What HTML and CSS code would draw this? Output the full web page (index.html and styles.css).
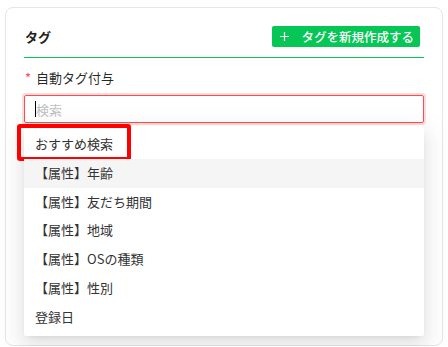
FILE: index.html
```html
<!DOCTYPE html>
<html lang="ja">
<head>
    <meta charset="utf-8">
    <title>タグ</title>
    <link rel="stylesheet" href="styles.css">
</head>
<body>
    <div class="card">
        <div class="card-head">
            <span class="card-title">タグ</span>
            <button class="btn-new">
                <svg class="plus" width="9" height="9" viewBox="0 0 9 9"><path d="M4.5 0V9M0 4.5H9" stroke="#fff" stroke-width="1.2"/></svg>
                タグを新規作成する
            </button>
        </div>

        <div class="field">
            <div class="field-label"><span class="req">*</span>自動タグ付与</div>
            <div class="select">
                <span class="caret"></span><span class="placeholder">検索</span>
            </div>
            <div class="dropdown">
                <div class="option first">おすすめ検索<span class="mark"></span></div>
                <div class="option active">【属性】年齢</div>
                <div class="option">【属性】友だち期間</div>
                <div class="option">【属性】地域</div>
                <div class="option">【属性】OSの種類</div>
                <div class="option">【属性】性別</div>
                <div class="option">登録日</div>
            </div>
        </div>
    </div>
</body>
</html>
```

FILE: styles.css
```css
body {
    margin: 0;
    padding: 7px 5px 0 5px;
    background-color: #fff;
    font-family: "Noto Sans CJK JP", "Noto Sans", sans-serif;
    color: rgba(0, 0, 0, 0.85);
}
.card {
    height: 339px;
    box-sizing: border-box;
    border: 1px solid #e6e6e6;
    border-radius: 8px;
    padding: 18px 18px 0 18px;
}
.card-head {
    display: flex;
    justify-content: space-between;
    align-items: center;
    padding: 0 0 10px 0;
    margin-right: 0;
    border-bottom: 1px solid #06c755;
}
.card-title {
    font-size: 13px;
    font-weight: bold;
    color: #222;
    line-height: 21px;
    padding-left: 1px;
}
.btn-new {
    display: flex;
    align-items: center;
    height: 21px;
    margin-right: 4px;
    padding: 0 6px 0 8px;
    border: none;
    border-radius: 2px;
    background-color: #06c755;
    color: #fff;
    font-family: inherit;
    font-size: 12.5px;
    font-weight: 500;
    cursor: pointer;
}
.plus {
    margin-right: 12px;
}
.field {
    position: relative;
    padding-top: 10px;
}
.field-label {
    font-size: 13px;
    line-height: 20px;
    margin-bottom: 7px;
}
.req {
    color: #ff4d4f;
    margin: 0 5px 0 1px;
}
.select {
    display: flex;
    align-items: center;
    height: 28px;
    box-sizing: border-box;
    border: 1px solid #ff4d4f;
    border-radius: 2px;
    box-shadow: 0 0 0 2px rgba(255, 77, 79, 0.2);
    padding-left: 10px;
    font-size: 13px;
}
.caret {
    width: 1px;
    height: 16px;
    background-color: #000;
}
.placeholder {
    color: #bfbfbf;
}
.dropdown {
    position: absolute;
    left: 0;
    right: 0;
    top: 68px;
    padding: 4px 0;
    background-color: #fff;
    border-radius: 2px;
    box-shadow: 0 3px 6px -4px rgba(0, 0, 0, 0.12), 0 6px 16px 0 rgba(0, 0, 0, 0.08), 0 9px 28px 8px rgba(0, 0, 0, 0.05);
}
.option {
    position: relative;
    padding: 4px 11px;
    font-size: 13px;
    line-height: 20.8px;
    color: #333;
}
.option.active {
    background-color: #f5f5f5;
}
.mark {
    position: absolute;
    left: -7px;
    top: -6px;
    width: 114px;
    height: 37px;
    box-sizing: border-box;
    border: 4.5px solid #ff0000;
    border-radius: 3px;
}
```
